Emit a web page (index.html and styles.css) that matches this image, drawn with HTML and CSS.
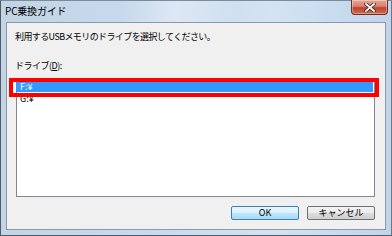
FILE: index.html
```html
<!DOCTYPE html>
<html lang="ja">
<head>
    <meta charset="UTF-8">
    <meta name="viewport" content="width=device-width, initial-scale=1.0">
    <title>PC乗換ガイド</title>
    <link rel="stylesheet" href="styles.css">
</head>
<body>
    <div class="window">
        <div class="titlebar">
            <span class="title">PC乗換ガイド</span>
            <button class="close-btn">
                <svg width="12" height="9" viewBox="0 0 12 9">
                    <path d="M2 1 L10 8 M10 1 L2 8" stroke="#3b2a2a" stroke-width="3.4" stroke-linecap="square"/>
                    <path d="M2 1 L10 8 M10 1 L2 8" stroke="#ffffff" stroke-width="1.8" stroke-linecap="square"/>
                </svg>
            </button>
        </div>
        <div class="client">
            <p class="prompt">利用するUSBメモリのドライブを選択してください。</p>
            <p class="drive-label">ドライブ(<u>D</u>):</p>
            <div class="listbox">
                <div class="item selected">F:¥</div>
                <div class="item">G:¥</div>
                <div class="mark"></div>
            </div>
            <div class="btns">
                <button class="btn default">OK</button>
                <button class="btn">キャンセル</button>
            </div>
        </div>
    </div>
</body>
</html>
```

FILE: styles.css
```css
*{
    margin: 0;
    padding: 0;
    box-sizing: border-box;
}
body{
    background: #ffffff;
    font-family: "Noto Sans CJK JP", "Noto Sans", sans-serif;
}
.window{
    width: 392px;
    height: 236px;
    border: 1px solid #4f5b68;
    border-top-color: #7f8b98;
    border-right-color: #6c7784;
    background: linear-gradient(90deg, #c3d4e6 0%, #c8daee 40%, #d3e3f3 70%, #bfd5ec 100%);
    padding: 0 5px 5px 5px;
    display: flex;
    flex-direction: column;
}
.window .titlebar{
    height: 21px;
    display: flex;
    align-items: flex-start;
    justify-content: space-between;
    background: linear-gradient(100deg, rgba(255,255,255,0) 30%, rgba(255,255,255,.35) 45%, rgba(255,255,255,0) 60%);
}
.window .titlebar .title{
    font-size: 10px;
    line-height: 12px;
    color: #000;
    margin: 4px 0 0 -1px;
    letter-spacing: -0.2px;
}
.window .titlebar .close-btn{
    width: 37px;
    height: 15px;
    margin-right: -2px;
    margin-top: -1px;
    border: 1px solid #6b2d26;
    border-top: none;
    border-radius: 0 0 4px 4px;
    background: linear-gradient(#e4a594 0%, #d7806e 45%, #c2412e 55%, #cf6a4f 100%);
    display: flex;
    align-items: center;
    justify-content: center;
    box-shadow: inset 0 0 0 1px rgba(255,255,255,.35);
}
.window .client{
    flex: 1;
    border: 1px solid #8d99a7;
    background: #f0f0f0;
    padding: 8px 10px 0 8px;
    font-size: 9px;
    color: #000;
}
.window .client .prompt{
    line-height: 12px;
    letter-spacing: -0.6px;
}
.window .client .drive-label{
    line-height: 12px;
    margin-top: 17px;
    letter-spacing: -0.5px;
}
.window .client .drive-label u{
    text-decoration-thickness: 1px;
}
.window .client .listbox{
    position: relative;
    margin: 7px 0 0 1px;
    height: 118px;
    background: #ffffff;
    border: 1px solid #828790;
    padding: 1px;
}
.window .client .listbox .item{
    height: 11px;
    line-height: 11px;
    padding-left: 2px;
    font-size: 9px;
}
.window .client .listbox .item.selected{
    background: #3399ff;
    color: #ffffff;
    margin: 0 0 1px -2px;
    padding-left: 4px;
}
.window .client .listbox .mark{
    position: absolute;
    left: -8px;
    top: -2px;
    width: 370px;
    height: 19px;
    border: 4px solid #ff0000;
    box-shadow: inset 3px 0 0 #ffffff;
}
.window .client .btns{
    display: flex;
    justify-content: flex-end;
    gap: 8px;
    margin-top: 9px;
}
.window .client .btns .btn{
    width: 68px;
    height: 14px;
    font-family: "Noto Sans CJK JP", "Noto Sans", sans-serif;
    font-size: 9px;
    line-height: 12px;
    border: 1px solid #707070;
    border-radius: 2px;
    background: linear-gradient(#f2f2f2 0%, #ebebeb 50%, #dddddd 51%, #cfcfcf 100%);
    color: #000;
}
.window .client .btns .btn.default{
    border-color: #3c7fb1;
    background: linear-gradient(#eaf6fd 0%, #d9f0fc 50%, #bee6fd 51%, #a7d9f5 100%);
}
```
